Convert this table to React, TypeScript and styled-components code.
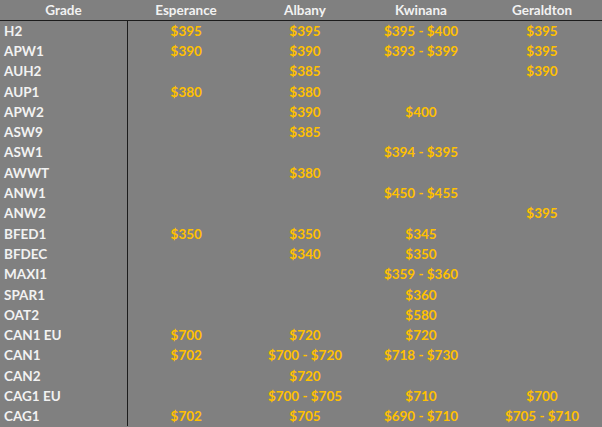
import React from "react";
import styled, { createGlobalStyle } from "styled-components";

const GlobalStyle = createGlobalStyle`
  html, body {
    margin: 0;
    padding: 0;
    background: #808080;
    overflow: hidden;
  }
`;

const Sheet = styled.table`
  border-collapse: collapse;
  table-layout: fixed;
  width: 607px;
  background: #808080;
  font-family: Lato, "Open Sans", sans-serif;
  font-weight: 700;
  font-size: 13.5px;
`;

const HeadCell = styled.th`
  height: 20px;
  padding: 0;
  color: #f2f2f2;
  font-weight: 700;
  text-align: center;
  border-bottom: 1px solid #1c1c1c;
  vertical-align: middle;
`;

const Row = styled.tr`
  height: 20.3px;
`;

const GradeCell = styled.td`
  padding: 0 0 0 4px;
  color: #f2f2f2;
  text-align: left;
  border-right: 1px solid #1c1c1c;
  white-space: nowrap;
`;

const PriceCell = styled.td`
  padding: 0;
  color: #ffc000;
  text-align: center;
  white-space: nowrap;
`;

const columns = ["Esperance", "Albany", "Kwinana", "Geraldton"];
const widths = [127, 118, 120, 112, 130];

const rows: [string, string, string, string, string][] = [
  ["H2", "$395", "$395", "$395 - $400", "$395"],
  ["APW1", "$390", "$390", "$393 - $399", "$395"],
  ["AUH2", "", "$385", "", "$390"],
  ["AUP1", "$380", "$380", "", ""],
  ["APW2", "", "$390", "$400", ""],
  ["ASW9", "", "$385", "", ""],
  ["ASW1", "", "", "$394 - $395", ""],
  ["AWWT", "", "$380", "", ""],
  ["ANW1", "", "", "$450 - $455", ""],
  ["ANW2", "", "", "", "$395"],
  ["BFED1", "$350", "$350", "$345", ""],
  ["BFDEC", "", "$340", "$350", ""],
  ["MAXI1", "", "", "$359 - $360", ""],
  ["SPAR1", "", "", "$360", ""],
  ["OAT2", "", "", "$580", ""],
  ["CAN1 EU", "$700", "$720", "$720", ""],
  ["CAN1", "$702", "$700 - $720", "$718 - $730", ""],
  ["CAN2", "", "$720", "", ""],
  ["CAG1 EU", "", "$700 - $705", "$710", "$700"],
  ["CAG1", "$702", "$705", "$690 - $710", "$705 - $710"],
];

export default function App() {
  return (
    <>
      <GlobalStyle />
      <Sheet>
        <colgroup>
          {widths.map((w, i) => (
            <col key={i} style={{ width: w }} />
          ))}
        </colgroup>
        <thead>
          <tr>
            <HeadCell>Grade</HeadCell>
            {columns.map((c) => (
              <HeadCell key={c}>{c}</HeadCell>
            ))}
          </tr>
        </thead>
        <tbody>
          {rows.map(([grade, ...prices]) => (
            <Row key={grade}>
              <GradeCell>{grade}</GradeCell>
              {prices.map((p, i) => (
                <PriceCell key={i}>{p}</PriceCell>
              ))}
            </Row>
          ))}
        </tbody>
      </Sheet>
    </>
  );
}
